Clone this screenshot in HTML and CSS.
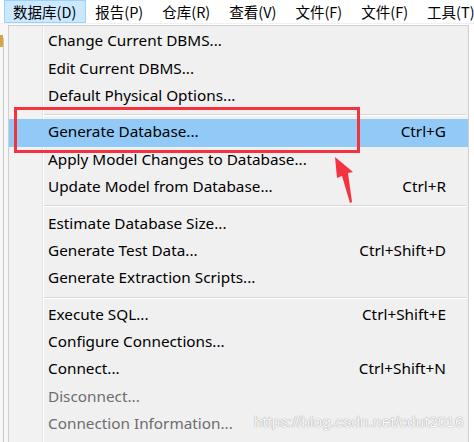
FILE: index.html
```html
<!DOCTYPE html>
<html>
<head>
<meta charset="utf-8">
<link rel="stylesheet" href="styles.css">
</head>
<body>
<div class="menubar">
  <span class="mb-item active">数据库(D)</span>
  <span class="mb-item">报告(P)</span>
  <span class="mb-item">仓库(R)</span>
  <span class="mb-item">查看(V)</span>
  <span class="mb-item">文件(F)</span>
  <span class="mb-item">文件(F)</span>
  <span class="mb-item">工具(T)</span>
</div>
<div class="workspace">
  <div class="side">
    <div class="side-icon"></div>
    <div class="side-line"></div>
  </div>
  <div class="popup">
    <div class="row"><span class="label">Change Current DBMS...</span></div>
    <div class="row"><span class="label">Edit Current DBMS...</span></div>
    <div class="row"><span class="label">Default Physical Options...</span></div>
    <div class="sep"></div>
    <div class="row hl"><span class="label">Generate Database...</span><span class="key">Ctrl+G</span></div>
    <div class="row"><span class="label">Apply Model Changes to Database...</span></div>
    <div class="row"><span class="label">Update Model from Database...</span><span class="key">Ctrl+R</span></div>
    <div class="sep"></div>
    <div class="row"><span class="label">Estimate Database Size...</span></div>
    <div class="row"><span class="label">Generate Test Data...</span><span class="key">Ctrl+Shift+D</span></div>
    <div class="row"><span class="label">Generate Extraction Scripts...</span></div>
    <div class="sep"></div>
    <div class="row"><span class="label">Execute SQL...</span><span class="key">Ctrl+Shift+E</span></div>
    <div class="row"><span class="label">Configure Connections...</span></div>
    <div class="row"><span class="label">Connect...</span><span class="key">Ctrl+Shift+N</span></div>
    <div class="row dis"><span class="label">Disconnect...</span></div>
    <div class="row dis"><span class="label">Connection Information...</span></div>
    <div class="watermark">https://blog.csdn.net/cdut2016</div>
  </div>
  <div class="redbox"></div>
  <svg class="arrow" width="30" height="50" viewBox="0 0 30 50">
    <polygon points="2,0 20,15 15,16 19,45 17,46 9,19 4,21" fill="#f5333f"/>
  </svg>
</div>
</body>
</html>
```
FILE: styles.css
```css
html, body {
  margin: 0;
  padding: 0;
  background: #ffffff;
  overflow: hidden;
}
body {
  width: 474px;
  height: 442px;
  font-family: "Noto Sans", "Noto Sans CJK SC", sans-serif;
  color: #000;
}
.menubar {
  height: 23px;
  display: flex;
  align-items: center;
  padding-left: 4px;
  font-family: "Noto Sans CJK SC", sans-serif;
  font-size: 14.5px;
  border-bottom: 1px solid #f0f0f0;
}
.mb-item {
  height: 21px;
  line-height: 21px;
  padding: 0 9px 0 8px;
  border: 1px solid transparent;
  white-space: nowrap;
}
.mb-item.active {
  background: #cce8ff;
  border-color: #99d1ff;
}
.workspace {
  position: relative;
  height: 418px;
}
.side {
  position: absolute;
  left: 0;
  top: 0;
  width: 8px;
  height: 418px;
  background: #f7f7f7;
}
.side-icon {
  position: absolute;
  left: 0;
  top: 11px;
  width: 3px;
  height: 12px;
  background: #d9a441;
}
.side-line {
  position: absolute;
  left: 3px;
  top: 14px;
  width: 1px;
  height: 404px;
  background: #c8c8c8;
}
.popup {
  position: absolute;
  left: 8px;
  top: 1px;
  width: 461px;
  height: 430px;
  background: #f0f0f0;
  border: 1px solid #cfcfcf;
  padding: 2px 0 0 0;
  box-sizing: border-box;
  font-size: 15.3px;
  background-image: linear-gradient(to right, #f2f2f2 0, #f2f2f2 33px, #e2e3e3 33px, #e2e3e3 34px, #ffffff 34px, #ffffff 35px, transparent 35px);
}
.row {
  height: 27.4px;
  box-sizing: border-box;
  display: flex;
  align-items: center;
  padding-left: 39px;
  padding-right: 22px;
  padding-bottom: 3px;
  white-space: nowrap;
}
.row .label {
  flex: 1;
}
.row .key {
  text-align: right;
}
.row.hl {
  background: #91c9f7;
}
.row.dis {
  color: #6d6d6d;
}
.sep {
  height: 9px;
  position: relative;
}
.sep::after {
  content: "";
  position: absolute;
  left: 35px;
  right: 2px;
  top: 4px;
  height: 1px;
  background: #d7d7d7;
  box-shadow: 0 1px 0 #ffffff;
}
.watermark {
  position: absolute;
  left: 245px;
  top: 387px;
  font-family: "Liberation Sans", sans-serif;
  font-size: 15.5px;
  color: #fbfbfb;
  text-shadow: 0 0 1px #9a9a9a, 0 0 1px #aaaaaa;
  letter-spacing: 0.1px;
}
.redbox {
  position: absolute;
  left: 14px;
  top: 83px;
  width: 340px;
  height: 40px;
  border: 3px solid #f5333f;
}
.arrow {
  position: absolute;
  left: 333px;
  top: 133px;
}
```
